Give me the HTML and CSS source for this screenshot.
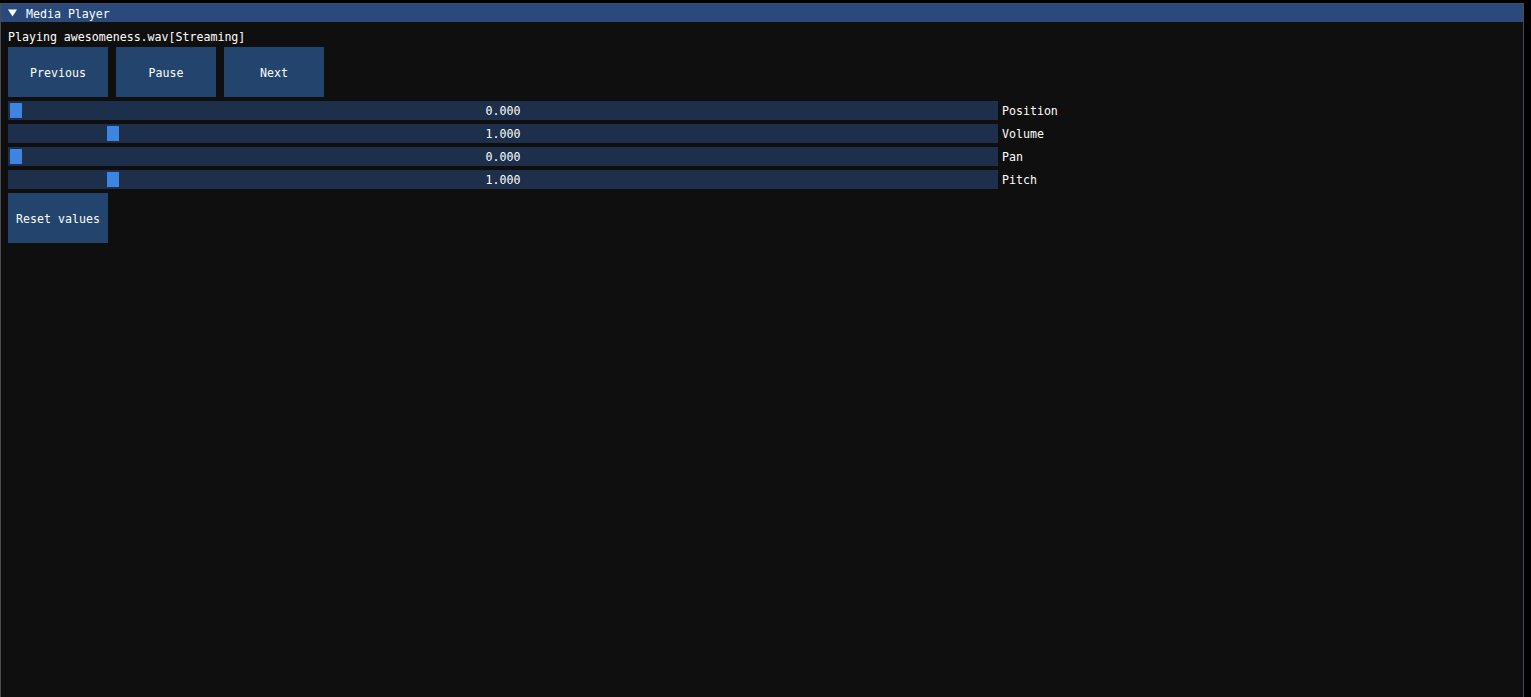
FILE: index.html
```html
<!DOCTYPE html>
<html>
<head>
<meta charset="utf-8">
<link rel="stylesheet" href="styles.css">
</head>
<body>
<div class="window">
  <div class="titlebar">
    <svg class="arrow" width="9" height="8" viewBox="0 0 9 8"><polygon points="0,0.5 9,0.5 4.5,7.5" fill="#fff"/></svg>
    <span class="title txt">Media Player</span>
  </div>
  <div class="content">
    <div class="line">Playing awesomeness.wav[Streaming]</div>
    <div class="buttons">
      <div class="btn"><span class="txt">Previous</span></div>
      <div class="btn"><span class="txt">Pause</span></div>
      <div class="btn"><span class="txt">Next</span></div>
    </div>
    <div class="row">
      <div class="slider"><div class="grab" style="left:2px"></div><span class="val txt">0.000</span></div>
      <span class="label txt">Position</span>
    </div>
    <div class="row">
      <div class="slider"><div class="grab" style="left:99px"></div><span class="val txt">1.000</span></div>
      <span class="label txt">Volume</span>
    </div>
    <div class="row">
      <div class="slider"><div class="grab" style="left:2px"></div><span class="val txt">0.000</span></div>
      <span class="label txt">Pan</span>
    </div>
    <div class="row">
      <div class="slider"><div class="grab" style="left:99px"></div><span class="val txt">1.000</span></div>
      <span class="label txt">Pitch</span>
    </div>
    <div class="buttons">
      <div class="btn"><span class="txt">Reset values</span></div>
    </div>
  </div>
</div>
</body>
</html>
```
FILE: styles.css
```css
html, body {
  margin: 0;
  padding: 0;
  background: #000;
  height: 100%;
  overflow: hidden;
}
body {
  font-family: "DejaVu Sans Mono", "Liberation Mono", monospace;
  font-size: 11.6px;
  color: #fff;
}
.window {
  box-sizing: border-box;
  margin-top: 3px;
  width: 1524px;
  height: 694px;
  background: #0f0f0f;
  border: 1px solid #4a4a55;
  border-bottom: none;
  display: flex;
  flex-direction: column;
}
.titlebar {
  height: 18px;
  background: #294a7a;
  display: flex;
  align-items: center;
  padding-left: 7px;
}
.arrow {
  display: block;
  margin-right: 9px;
}
.txt {
  display: block;
  line-height: 13px;
  padding-top: 2px;
  white-space: pre;
}
.content {
  padding: 8px 7px;
  display: flex;
  flex-direction: column;
  gap: 4px;
}
.line {
  height: 13px;
  line-height: 15px;
  white-space: pre;
}
.buttons {
  display: flex;
  gap: 8px;
}
.btn {
  width: 100px;
  height: 50px;
  background: #23456d;
  display: flex;
  align-items: center;
  justify-content: center;
}
.row {
  display: flex;
  align-items: center;
  gap: 4px;
  height: 19px;
}
.slider {
  position: relative;
  width: 990px;
  height: 19px;
  background: #1d2f4a;
  display: flex;
  align-items: center;
  justify-content: center;
}
.grab {
  position: absolute;
  top: 2px;
  width: 12px;
  height: 15px;
  background: #3d85e0;
}
.val {
  position: relative;
}
```
